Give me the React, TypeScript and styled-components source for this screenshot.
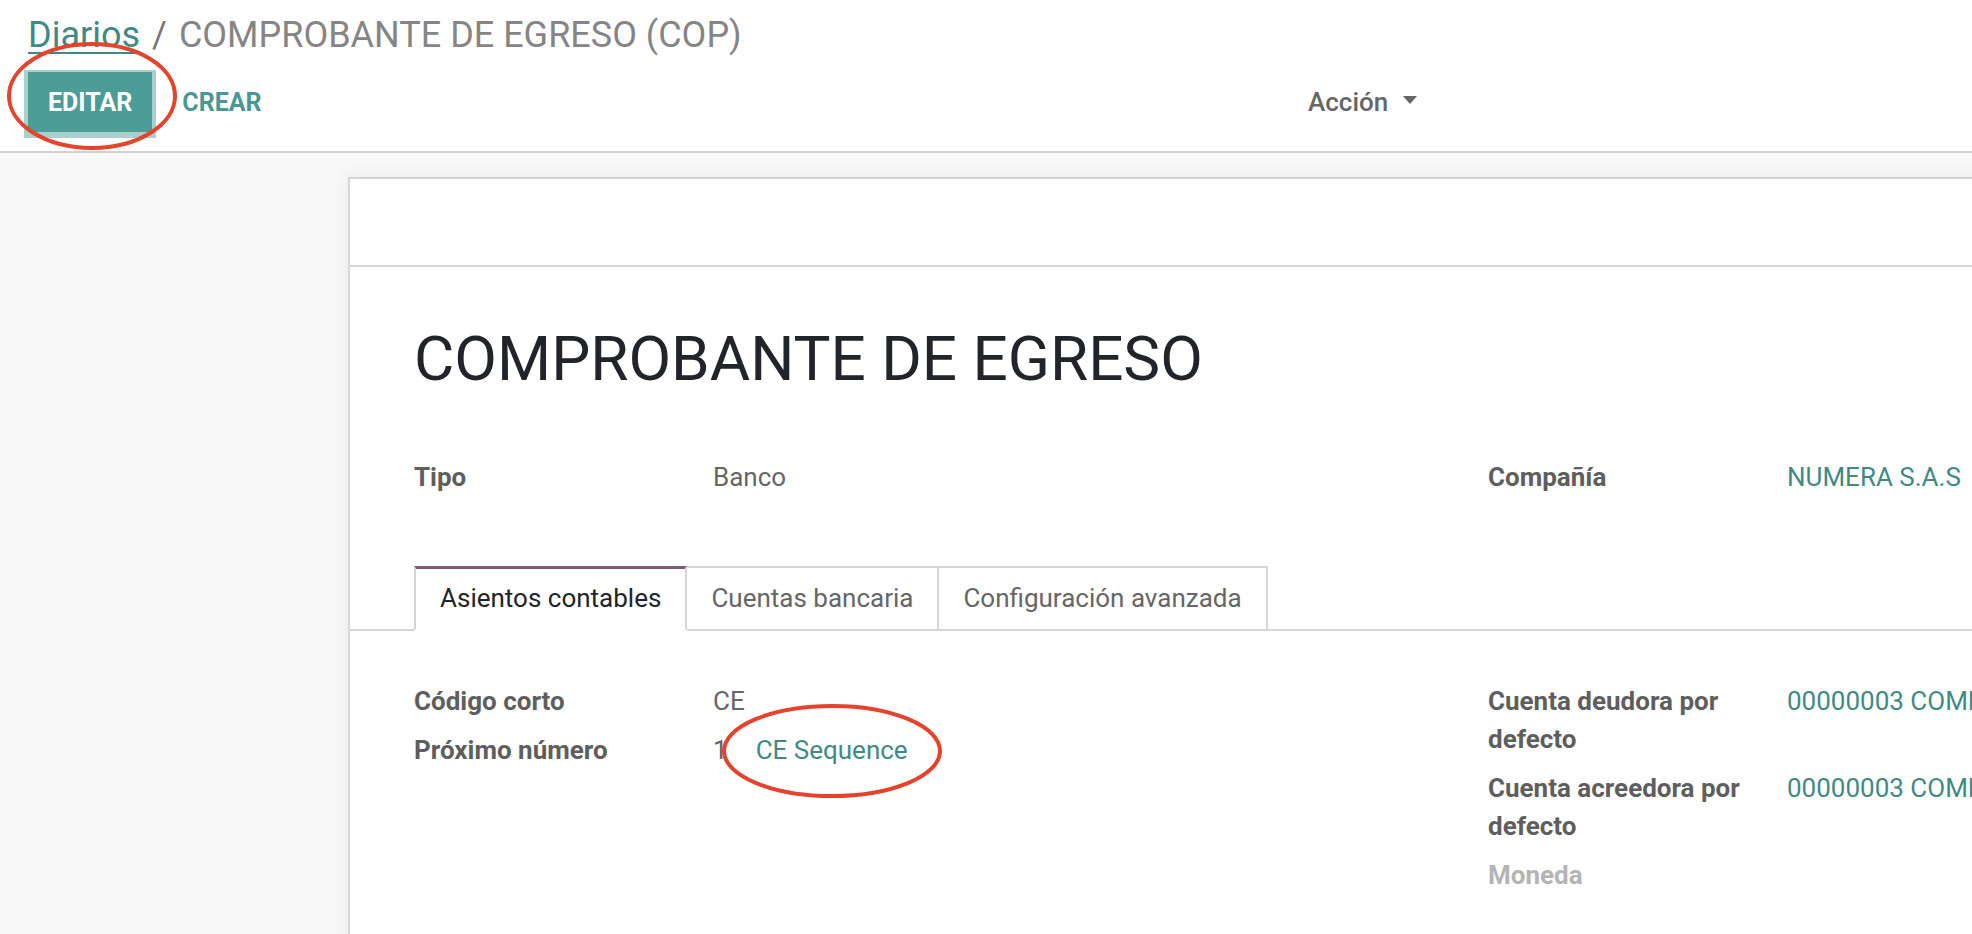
import React from 'react';
import styled, { createGlobalStyle } from 'styled-components';

const GlobalStyle = createGlobalStyle`
  html, body {
    margin: 0;
    padding: 0;
    overflow: hidden;
    background: #f8f8f8;
  }
  body {
    font-family: Roboto, 'Noto Sans', sans-serif;
    font-size: 26px;
    color: #666;
  }
`;

type FieldRow = {
  label: string;
  value?: React.ReactNode;
  muted?: boolean;
};

const tabs = ['Asientos contables', 'Cuentas bancaria', 'Configuración avanzada'];

const FieldGroups: React.FC<{ groups: FieldRow[][] }> = ({ groups }) => (
  <Groups>
    {groups.map((group, i) => (
      <Group key={i}>
        {group.map((f) => (
          <React.Fragment key={f.label}>
            <Label muted={f.muted}>{f.label}</Label>
            <Value>{f.value}</Value>
          </React.Fragment>
        ))}
      </Group>
    ))}
  </Groups>
);

const App: React.FC = () => {
  const headerFields: FieldRow[][] = [
    [{ label: 'Tipo', value: 'Banco' }],
    [{ label: 'Compañía', value: <Link>NUMERA S.A.S</Link> }],
  ];

  const tabFields: FieldRow[][] = [
    [
      { label: 'Código corto', value: 'CE' },
      {
        label: 'Próximo número',
        value: (
          <>
            1<SequenceLink>CE Sequence</SequenceLink>
          </>
        ),
      },
    ],
    [
      { label: 'Cuenta deudora por defecto', value: <Link>00000003 COMPROBANTE DE EGRESO</Link> },
      { label: 'Cuenta acreedora por defecto', value: <Link>00000003 COMPROBANTE DE EGRESO</Link> },
      { label: 'Moneda', muted: true },
    ],
  ];

  return (
    <Page>
      <GlobalStyle />
      <ControlPanel>
        <Breadcrumb>
          <CrumbLink>Diarios</CrumbLink>
          <CrumbSep>/</CrumbSep>
          <CrumbActive>COMPROBANTE DE EGRESO (COP)</CrumbActive>
        </Breadcrumb>
        <ButtonRow>
          <LeftButtons>
            <PrimaryButton>Editar</PrimaryButton>
            <SecondaryButton>Crear</SecondaryButton>
          </LeftButtons>
          <Sidebar>
            <DropdownToggle>
              Acción
              <Caret />
            </DropdownToggle>
          </Sidebar>
        </ButtonRow>
      </ControlPanel>

      <Content>
        <Sheet>
          <SheetHeader />
          <SheetBody>
            <Title>COMPROBANTE DE EGRESO</Title>
            <HeaderGroups>
              <FieldGroups groups={headerFields} />
            </HeaderGroups>

            <Notebook>
              <TabList>
                {tabs.map((t, i) => (
                  <Tab key={t} active={i === 0}>
                    {t}
                  </Tab>
                ))}
              </TabList>
              <TabPane>
                <FieldGroups groups={tabFields} />
              </TabPane>
            </Notebook>
          </SheetBody>
        </Sheet>
      </Content>

      {/* anotaciones a mano alzada encima de la captura */}
      <Annotations viewBox="0 0 1972 934" width="1972" height="934">
        <ellipse cx="92" cy="96" rx="83" ry="52" />
        <ellipse cx="832" cy="751" rx="108" ry="45" />
      </Annotations>
    </Page>
  );
};

export default App;

const Page = styled.div`
  position: relative;
  width: 1972px;
  height: 934px;
  overflow: hidden;
  background: #f8f8f8;
`;

const ControlPanel = styled.div`
  background: #fff;
  padding: 12px 28px 19px;
  border-bottom: 2px solid #d2d2d2;
`;

const Breadcrumb = styled.div`
  display: flex;
  align-items: center;
  font-size: 36px;
  line-height: 46px;
  white-space: nowrap;
`;

const CrumbLink = styled.a`
  color: #3f8a85;
  text-decoration: underline;
  text-decoration-thickness: 2px;
  text-underline-offset: 5px;
`;

const CrumbSep = styled.span`
  color: #777;
  padding: 0 12px;
`;

const CrumbActive = styled.span`
  color: #858585;
`;

const ButtonRow = styled.div`
  display: grid;
  grid-template-columns: 1280px 1fr;
  align-items: center;
  margin-top: 14px;
`;

const LeftButtons = styled.div`
  display: flex;
  align-items: center;
  gap: 10px;
`;

const PrimaryButton = styled.button`
  height: 60px;
  padding: 0 20px;
  border: none;
  background: #4c9c98;
  color: #fff;
  font-family: Roboto, sans-serif;
  font-size: 25px;
  font-weight: 700;
  text-transform: uppercase;
  box-shadow: 0 2px 0 4px #a9d0cd;
`;

const SecondaryButton = styled.button`
  height: 60px;
  padding: 0 20px;
  border: none;
  background: transparent;
  color: #4a9893;
  font-family: Roboto, sans-serif;
  font-size: 25px;
  font-weight: 700;
  text-transform: uppercase;
`;

const Sidebar = styled.div`
  display: flex;
`;

const DropdownToggle = styled.div`
  display: flex;
  align-items: center;
  color: #666;
  font-size: 26px;
  font-weight: 500;
`;

const Caret = styled.span`
  width: 0;
  height: 0;
  margin-left: 15px;
  margin-bottom: 4px;
  border-top: 8px solid #666;
  border-left: 7px solid transparent;
  border-right: 7px solid transparent;
`;

const Content = styled.div`
  padding: 24px 0 0 348px;
`;

const Sheet = styled.div`
  width: 2280px;
  min-height: 800px;
  background: #fff;
  border: 2px solid #d3d7db;
  box-shadow: 0 0 18px rgba(0, 0, 0, 0.07);
`;

const SheetHeader = styled.div`
  height: 86px;
  border-bottom: 2px solid #d3d7db;
`;

const SheetBody = styled.div`
  padding: 54px 64px 0;
`;

const Title = styled.h1`
  margin: 0;
  font-size: 62px;
  line-height: 76px;
  font-weight: 400;
  color: #212529;
`;

const HeaderGroups = styled.div`
  margin-top: 61px;
`;

const Groups = styled.div`
  display: grid;
  grid-template-columns: 1074px 1074px;
`;

const Group = styled.div`
  display: grid;
  grid-template-columns: 299px 1fr;
  row-gap: 11px;
  align-content: start;
  line-height: 38px;
`;

const Label = styled.div<{ muted?: boolean }>`
  padding-right: 28px;
  font-weight: 700;
  color: ${(p) => (p.muted ? '#b4b4b4' : '#5e5e5e')};
`;

const Value = styled.div`
  color: #666;
  white-space: nowrap;
`;

const Link = styled.a`
  color: #3f8a85;
`;

const SequenceLink = styled.a`
  color: #3f8a85;
  margin-left: 28px;
`;

const Notebook = styled.div`
  margin-top: 70px;
`;

const TabList = styled.div`
  display: flex;
  margin: 0 -64px;
  padding-left: 64px;
  border-bottom: 2px solid #d3d7db;
`;

const Tab = styled.div<{ active?: boolean }>`
  margin-bottom: -2px;
  padding: 11px 24px 12px;
  line-height: 38px;
  border: 2px solid #d3d7db;
  border-left-width: ${(p) => (p.active ? '2px' : '0')};
  border-top-color: ${(p) => (p.active ? '#7d5a79' : '#d3d7db')};
  border-bottom-color: ${(p) => (p.active ? '#fff' : '#d3d7db')};
  box-shadow: ${(p) => (p.active ? 'inset 0 1px 0 #7d5a79' : 'none')};
  color: ${(p) => (p.active ? '#212529' : '#666')};
  background: #fff;
  white-space: nowrap;
`;

const TabPane = styled.div`
  padding-top: 51px;
`;

const Annotations = styled.svg`
  position: absolute;
  inset: 0;
  pointer-events: none;

  ellipse {
    fill: none;
    stroke: #e5432b;
    stroke-width: 4;
  }
`;
